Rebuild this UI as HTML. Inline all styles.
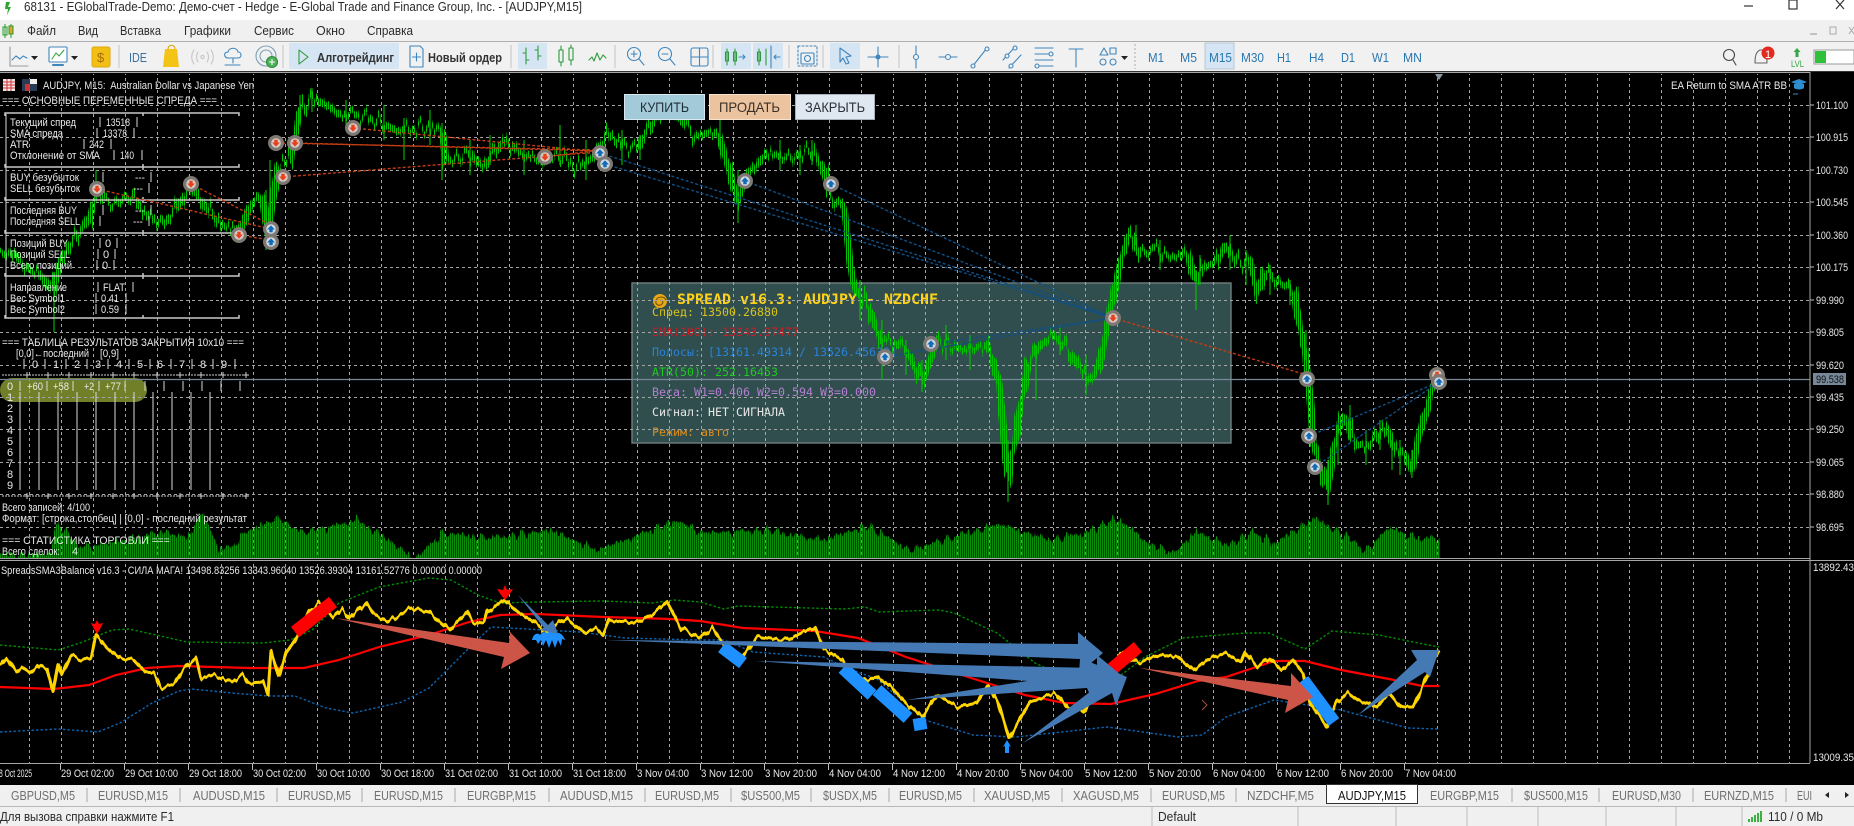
<!DOCTYPE html>
<html lang="ru"><head><meta charset="utf-8"><title>AUDJPY,M15</title>
<style>
html,body{margin:0;padding:0;background:#000;width:1854px;height:826px;overflow:hidden}
svg{display:block;filter:blur(.35px)}
text{font-family:"Liberation Sans","DejaVu Sans",sans-serif;white-space:pre}
.ui text{font-size:12.5px;fill:#2b2b2b}
.tf text{font-size:12.5px;fill:#2a78b0}
.tab text{font-size:12.5px;fill:#6f6f6f}
.c text{font-size:11px;fill:#e8e8e8}
.ax text{font-size:11px;fill:#e8e8e8}
.m text{font-family:"DejaVu Sans Mono","Liberation Mono",monospace;font-size:11.6px}
.s{fill:none;stroke-linecap:round;stroke-linejoin:round}
</style></head><body>
<svg xmlns="http://www.w3.org/2000/svg" width="1854" height="826" viewBox="0 0 1854 826">
<defs>
<pattern id="vg" x="29" y="0" width="32" height="6" patternUnits="userSpaceOnUse"><rect width="1" height="3" fill="#a4a4a4"/></pattern>
<pattern id="tk" x="60" y="0" width="64" height="20" patternUnits="userSpaceOnUse"><rect width="1" height="20" fill="#bbb"/></pattern>
<pattern id="cs" x="0" y="0" width="2" height="4" patternUnits="userSpaceOnUse"><rect width="1.100" height="4" fill="#00c400"/></pattern>
<pattern id="vs" x="0" y="0" width="2" height="4" patternUnits="userSpaceOnUse"><rect width="1.400" height="4" fill="#0a8e0a"/></pattern>
<filter id="jit" filterUnits="userSpaceOnUse" x="0" y="60" width="1854" height="720" color-interpolation-filters="sRGB">
<feTurbulence type="fractalNoise" baseFrequency="0.22 0" numOctaves="3" seed="7"/>
<feColorMatrix type="matrix" values="1 0 0 0 0  0 0 0 0 .5  0 0 0 0 0  0 0 0 0 1" result="n"/>
<feDisplacementMap in="SourceGraphic" in2="n" scale="34" xChannelSelector="G" yChannelSelector="R"/>
</filter>
<filter id="jit2" filterUnits="userSpaceOnUse" x="0" y="60" width="1854" height="720" color-interpolation-filters="sRGB">
<feTurbulence type="fractalNoise" baseFrequency="0.2 0" numOctaves="3" seed="3"/>
<feColorMatrix type="matrix" values="1 0 0 0 0  0 0 0 0 .5  0 0 0 0 0  0 0 0 0 1" result="n"/>
<feDisplacementMap in="SourceGraphic" in2="n" scale="20" xChannelSelector="G" yChannelSelector="R"/>
</filter>
<filter id="jit3" filterUnits="userSpaceOnUse" x="0" y="560" width="1854" height="210" color-interpolation-filters="sRGB">
<feTurbulence type="fractalNoise" baseFrequency="0.18 0" numOctaves="2" seed="11"/>
<feColorMatrix type="matrix" values="1 0 0 0 0  0 0 0 0 .5  0 0 0 0 0  0 0 0 0 1" result="n"/>
<feDisplacementMap in="SourceGraphic" in2="n" scale="9" xChannelSelector="G" yChannelSelector="R"/>
</filter>
<clipPath id="volc"><rect x="0" y="440" width="1810" height="118"/></clipPath>
<clipPath id="mainc"><rect x="0" y="74" width="1810" height="484"/></clipPath>
<g id="mr"><circle r="8" fill="#7d7872"/><circle r="4.800" fill="#d8cbc6"/><path d="M-1.700-3.200h3.400v2.700h2.200L0 3.600-3.900-.5h2.200z" fill="#e8401c"/></g>
<g id="mb"><circle r="8" fill="#7d7872"/><circle r="4.800" fill="#cfd9e2"/><path d="M-1.700 3.200h3.400V.5h2.200L0-3.600-3.900.5h2.200z" fill="#1269b5"/></g>
<path id="pl" d="M27 372v6M24 375h6M48 372v6M45 375h6M69 372v6M66 375h6M91 372v6M88 375h6M113 372v6M110 375h6M134 372v6M131 375h6M157 372v6M154 375h6M180 372v6M177 375h6M201 372v6M198 375h6M223 372v6M220 375h6M246 372v6M243 375h6" stroke="#d0d0d0" fill="none"/>
</defs>
<rect width="1854" height="826" fill="#000"/>
<rect width="1854" height="20" fill="#fff"/>
<rect y="20" width="1854" height="21" fill="#f0f0f0"/>
<rect y="41" width="1854" height="1" fill="#b0b0b0"/>
<rect y="42" width="1854" height="29" fill="#f1f1f1"/>
<rect y="71" width="1854" height="1" fill="#333"/>
<rect y="785" width="1854" height="21" fill="#f0f0f0"/>
<rect y="806" width="1854" height="1" fill="#b8b8b8"/>
<rect y="807" width="1854" height="19" fill="#f0f0f0"/>

<!-- title -->
<g class="ui">
<path d="M6 2l4 0-2 5h3l-4 8 1-6H5z" fill="#2fa32f"/>
<text x="24" y="11" textLength="558" lengthAdjust="spacingAndGlyphs" font-size="12.5">68131 - EGlobalTrade-Demo: Демо-счет - Hedge - E-Global Trade and Finance Group, Inc. - [AUDJPY,M15]</text>
<path d="M1744 6h9" stroke="#333" stroke-width="1.2"/>
<rect x="1789" y="0" width="8" height="9" fill="none" stroke="#333" stroke-width="1.2"/>
<path d="M1836 0l8 9M1844 0l-8 9" stroke="#333" stroke-width="1.2"/>
<!-- menu -->
<path d="M5 24v14M11 24v14" stroke="#2a9a2a" stroke-width="1"/><rect x="3" y="27" width="4" height="8" fill="none" stroke="#2a9a2a"/><rect x="9" y="26" width="4" height="8" fill="#d7a82a" stroke="#2a9a2a"/>
<text x="27" y="35" textLength="29" lengthAdjust="spacingAndGlyphs">Файл</text>
<text x="78" y="35" textLength="20" lengthAdjust="spacingAndGlyphs">Вид</text>
<text x="120" y="35" textLength="41" lengthAdjust="spacingAndGlyphs">Вставка</text>
<text x="184" y="35" textLength="47" lengthAdjust="spacingAndGlyphs">Графики</text>
<text x="254" y="35" textLength="40" lengthAdjust="spacingAndGlyphs">Сервис</text>
<text x="316" y="35" textLength="29" lengthAdjust="spacingAndGlyphs">Окно</text>
<text x="367" y="35" textLength="46" lengthAdjust="spacingAndGlyphs">Справка</text>
<path d="M1810 34h7" stroke="#aaa" stroke-width="1.3"/><rect x="1830" y="27" width="6" height="7" fill="none" stroke="#aaa"/><path d="M1849 27l5 7M1854 27l-5 7" stroke="#aaa"/>
</g>

<!-- toolbar -->
<g class="ui">
<rect x="289" y="43" width="110" height="26" fill="#d5e5f3"/>
<rect x="518" y="43" width="29" height="26" fill="#d5e5f3"/>
<rect x="721" y="43" width="30" height="26" fill="#d5e5f3"/>
<rect x="753" y="43" width="30" height="26" fill="#d5e5f3"/>
<rect x="830" y="43" width="30" height="26" fill="#d5e5f3"/>
<rect x="1205" y="43" width="29" height="26" fill="#d5e5f3" stroke="#b8c8d6"/>
<g stroke="#c4c4c4" stroke-width="1"><path d="M119 45v23M283 45v23M511 45v23M615 45v23M713 45v23M789 45v23M823 45v23M899 45v23"/></g>
<path d="M1135 44v25" stroke="#aaa" stroke-dasharray="2 2"/>

<g class="s" stroke-width="1.100">
<path d="M10 47v19h18" stroke="#9a9a9a"/><path d="M12 60l4-4 4 3 3-3 4 2" stroke="#3f86bd"/>
<rect x="49" y="47" width="18" height="15" rx="1" stroke="#3f86bd" fill="#fff"/><path d="M52 59l4-6 3 3 5-6" stroke="#39a845"/><path d="M53 65h10" stroke="#3f86bd" stroke-width="2"/>
<path d="M168 49c0-5 7-5 7 0" stroke="#d9a80e"/>
<path d="M194 50c-3 4-3 10 0 14M211 50c3 4 3 10 0 14M198 52c-2 3-2 7 0 10M207 52c2 3 2 7 0 10" stroke="#c6c6c6"/><circle cx="202.500" cy="57" r="1.600" stroke="#c6c6c6"/>
<path d="M228 58c-4 0-5-6 0-6 1-5 9-5 10 0 4 0 4 6 0 6zM233 58v5M225 65h15" stroke="#3f86bd"/>
<circle cx="266" cy="56" r="10" stroke="#7f9fb4"/><circle cx="266" cy="56" r="6" stroke="#7f9fb4"/><circle cx="272" cy="62" r="5.500" fill="#4fb05a" stroke="#2f8a3c"/><path d="M269.500 62h5M272 59.500v5" stroke="#fff"/>
<path d="M299 50l9 7-9 7z" stroke="#2f9a3c"/>
<path d="M410 46h10l3 3v18h-13z" stroke="#3f86bd"/><path d="M416.500 53v8M412.500 57h8" stroke="#3f86bd"/>
<path d="M526 48v16M526 53h-3M526 60h3M538 46v14M538 50h-3M538 56h3" stroke="#2f9a3c"/>
<rect x="559" y="50" width="4" height="12" stroke="#2f9a3c"/><path d="M561 46v4M561 62v4" stroke="#2f9a3c"/><rect x="569" y="48" width="4" height="12" stroke="#2f9a3c"/><path d="M571 45v3M571 60v5" stroke="#2f9a3c"/>
<path d="M589 60l3-3 2 4 3-8 3 7 3-5 3 3" stroke="#2f9a3c"/>
<circle cx="634" cy="54" r="6.500" stroke="#3f86bd"/><path d="M639 59l5 6M631 54h6M634 51v6" stroke="#3f86bd"/>
<circle cx="665" cy="54" r="6.500" stroke="#3f86bd"/><path d="M670 59l5 6M662 54h6" stroke="#3f86bd"/>
<rect x="691" y="48" width="17" height="18" rx="2" stroke="#3f86bd"/><path d="M699.500 48v18M691 57h17" stroke="#3f86bd"/>
<path d="M727 49v16M735 49v16" stroke="#2f9a3c"/><rect x="725.500" y="52" width="3" height="9" stroke="#2f9a3c"/><rect x="733.500" y="52" width="3" height="9" stroke="#2f9a3c"/><path d="M739 57h6M743 55l2 2-2 2" stroke="#3f86bd"/>
<path d="M759 49v16M766 49v16" stroke="#2f9a3c"/><rect x="757.500" y="52" width="3" height="9" stroke="#2f9a3c"/><path d="M771 46v22" stroke="#3f86bd"/><path d="M774 57h6M776 55l-2 2 2 2" stroke="#3f86bd"/>
<rect x="798" y="46" width="19" height="20" stroke="#3f86bd" stroke-dasharray="2 2"/><rect x="801" y="53" width="13" height="11" rx="1" stroke="#3f86bd"/><circle cx="807.500" cy="58.500" r="3" stroke="#3f86bd"/>
<path d="M840 48l11 8-5 1 3 6-3 1-3-6-3 4z" stroke="#3f86bd"/>
<path d="M878 47v20M868 57h20" stroke="#3f86bd"/><circle cx="878" cy="57" r="2" fill="#3f86bd" stroke="#3f86bd"/>
<path d="M916 46v22" stroke="#3f86bd"/><circle cx="916" cy="57" r="2.500" stroke="#3f86bd" fill="#f1f1f1"/>
<path d="M939 57h18" stroke="#3f86bd"/><circle cx="948" cy="57" r="2.500" stroke="#3f86bd" fill="#f1f1f1"/>
<path d="M972 67l15-19" stroke="#3f86bd"/><circle cx="973" cy="66" r="2" stroke="#3f86bd" fill="#f1f1f1"/><circle cx="987" cy="49" r="2" stroke="#3f86bd" fill="#f1f1f1"/>
<path d="M1003 60l12-13M1009 68l12-13" stroke="#3f86bd"/><circle cx="1007" cy="56" r="2" stroke="#3f86bd" fill="#f1f1f1"/><circle cx="1015" cy="48" r="2" stroke="#3f86bd" fill="#f1f1f1"/><circle cx="1011" cy="66" r="2" stroke="#3f86bd" fill="#f1f1f1"/>
<path d="M1035 48h18M1035 54h18M1035 60h18M1035 66h18" stroke="#3f86bd"/><circle cx="1051" cy="54" r="2" fill="#f1f1f1" stroke="#3f86bd"/><circle cx="1037" cy="66" r="2" fill="#f1f1f1" stroke="#3f86bd"/>
<path d="M1069 49h14M1076 49v18" stroke="#3f86bd"/>
<path d="M1100 55l4-7 4 7zM1110 48h6v6h-6z" stroke="#3f86bd"/><circle cx="1103" cy="62" r="3" stroke="#3f86bd"/><circle cx="1113" cy="62" r="3" stroke="#3f86bd"/>
<circle cx="1729" cy="55" r="5.500" stroke="#444"/><path d="M1733 60l3 5" stroke="#444"/>
<path d="M1760 50c-4 2-5 6-5 13h12c0-7-1-11-5-13z" stroke="#666"/>
</g>
<path d="M31 56h7l-3.500 4z M71 56h7l-3.500 4z M1121 56h7l-3.500 4z" fill="#222"/>
<rect x="92" y="47" width="18" height="20" rx="2" fill="#f3bf14" stroke="#e0a90a"/>
<text x="97" y="62" style="fill:#a36f00;font-size:13px">$</text>
<text x="129" y="62" textLength="18" lengthAdjust="spacingAndGlyphs" style="fill:#3c6e9e;font-size:12.5px">IDE</text>
<path d="M165 49h12l2 18h-16z" fill="#f3c316"/>
<text x="317" y="62" textLength="77" lengthAdjust="spacingAndGlyphs" style="font-size:13px;font-weight:bold;fill:#333">Алготрейдинг</text>
<text x="428" y="62" textLength="74" lengthAdjust="spacingAndGlyphs" style="font-size:13px;font-weight:bold;fill:#333">Новый ордер</text>
<circle cx="1768" cy="53" r="6.500" fill="#e32a1e"/><text x="1765" y="58" style="fill:#fff;font-size:11px">1</text>
<path d="M1797 48l3.500 4h-2v5h-3v-5h-2z" fill="#35a845"/><text x="1791" y="67" textLength="13" lengthAdjust="spacingAndGlyphs" style="fill:#35a845;font-size:9px">LVL</text>
<rect x="1814" y="50" width="40" height="14" fill="#fff" stroke="#999"/><rect x="1815" y="51" width="11" height="12" fill="#2fc13a"/>
</g>
<g class="tf">
<text x="1148" y="62" textLength="16" lengthAdjust="spacingAndGlyphs">M1</text>
<text x="1180" y="62" textLength="17" lengthAdjust="spacingAndGlyphs">M5</text>
<text x="1209" y="62" textLength="23" lengthAdjust="spacingAndGlyphs">M15</text>
<text x="1241" y="62" textLength="23" lengthAdjust="spacingAndGlyphs">M30</text>
<text x="1277" y="62" textLength="14" lengthAdjust="spacingAndGlyphs">H1</text>
<text x="1309" y="62" textLength="15" lengthAdjust="spacingAndGlyphs">H4</text>
<text x="1341" y="62" textLength="14" lengthAdjust="spacingAndGlyphs">D1</text>
<text x="1372" y="62" textLength="17" lengthAdjust="spacingAndGlyphs">W1</text>
<text x="1403" y="62" textLength="19" lengthAdjust="spacingAndGlyphs">MN</text>
</g>

<!-- info panel -->
<rect x="632" y="283" width="599" height="160" fill="#304e4e" stroke="#717f7f" stroke-width="1.400"/>
<circle cx="660" cy="301" r="7" fill="#e6a817"/><path d="M660 301c2-2 4 1 2 3-3 3-7 0-6-3 1-5 8-5 10-1" fill="none" stroke="#7a5200" stroke-width="1.100"/>
<g class="m">
<text x="677" y="304" textLength="261" lengthAdjust="spacingAndGlyphs" style="font-size:14.500px;font-weight:bold;fill:#ffd21a">SPREAD v16.3: AUDJPY - NZDCHF</text>
<text x="652" y="316" textLength="126" style="fill:#d8c31c">Спред: 13500.26880</text>
<text x="652" y="336" textLength="147" style="fill:#d41a24">SMA(100): 13343.97477</text>
<text x="652" y="356" textLength="245" style="fill:#2a82d8">Полосы: [13161.49314 / 13526.45639]</text>
<text x="652" y="376" textLength="126" style="fill:#1fc91f">ATR(50): 252.16453</text>
<text x="652" y="396" textLength="224" style="fill:#b47fd0">Веса: W1=0.406 W2=0.594 W3=0.000</text>
<text x="652" y="416" textLength="133" style="fill:#e6e6e6">Сигнал: НЕТ СИГНАЛА</text>
<text x="652" y="436" textLength="77" style="fill:#d98f1f">Режим: авто</text>
</g>

<rect x="0" y="378" width="147" height="24" rx="12" fill="#717f28"/>

<!-- grid -->
<path d="M0 105.500H1810M0 137.500H1810M0 170.500H1810M0 202.500H1810M0 235.500H1810M0 267.500H1810M0 300.500H1810M0 332.500H1810M0 365.500H1810M0 397.500H1810M0 429.500H1810M0 462.500H1810M0 494.500H1810M0 527.500H1810" stroke="#a4a4a4" stroke-dasharray="3 3"/>
<rect x="0" y="74" width="1810" height="484" fill="url(#vg)"/>
<rect x="0" y="563" width="1810" height="200" fill="url(#vg)"/>
<path d="M0 379.500H1810" stroke="#778899" stroke-width="1.300"/>

<!-- volumes -->
<g clip-path="url(#volc)">
<polygon filter="url(#jit2)" fill="url(#vs)" points="0,555 50,554 54,530 60,525 80,547 112,543 160,532 187,537 203,512 219,550 232,547 245,532 279,518 303,533 357,520 384,537 415,559 442,533 491,538 549,530 598,550 625,540 678,520 700,533 768,530 820,540 868,526 910,550 960,535 1000,524 1050,540 1087,532 1117,518 1147,542 1173,553 1196,532 1229,545 1252,532 1276,543 1314,518 1358,543 1363,553 1388,528 1417,538 1440,538 1440,590 0,590"/>
</g>

<!-- candles -->
<g clip-path="url(#mainc)">
<polyline filter="url(#jit)" fill="none" stroke="url(#cs)" stroke-width="7" stroke-linejoin="bevel" points="0,256 10,252 20,262 30,270 40,274 53,292 60,262 70,245 80,232 90,218 97,190 105,200 115,205 130,195 145,212 160,225 175,210 191,186 205,205 222,225 240,232 250,205 262,195 268,235 278,165 290,160 300,112 312,97 339,113 366,117 402,132 420,127 442,130 446,163 469,153 482,167 504,140 518,153 540,160 562,157 576,167 594,157 609,133 625,147 638,147 652,123 665,105 683,122 696,137 710,132 719,137 730,173 737,203 745,177 768,153 790,158 812,150 824,170 830,197 844,207 850,263 855,290 865,300 881,340 897,343 910,355 922,381 938,340 963,350 987,345 999,380 1004,440 1008,480 1012,455 1022,400 1028,365 1040,345 1053,335 1065,345 1081,370 1093,380 1101,360 1110,310 1116,285 1120,262 1131,232 1140,255 1155,248 1165,255 1180,258 1187,250 1195,280 1205,265 1215,265 1225,245 1240,265 1250,260 1258,295 1265,270 1280,285 1288,285 1295,295 1300,330 1305,350 1310,395 1313,440 1320,470 1327,490 1333,450 1340,425 1345,415 1355,445 1370,445 1385,425 1395,450 1405,455 1412,470 1420,430 1427,410 1433,385 1439,375"/>
<path d="M54 272V332M442 123V180M1196 270V310M1008 440V502M1328 460V505M738 170V223M622 130V165M1306 330V360M1412 450V478M922 360V392M882 320V380M96 170V200M266 190V250M270 160V240M312 88V112M300 95V125M346 100V130M384 105V140M404 118V160M430 110V145M470 140V175M490 135V165M524 140V175M560 125V165M586 140V180M640 135V160M720 120V150M780 140V170M800 145V175M812 140V165M860 280V320M906 340V375M946 325V360M970 335V370M1036 345V400M1060 325V355M1086 355V395M1136 225V245M1160 240V270M1200 255V285M1230 235V270M1246 250V285M1270 265V295M1290 280V305M1338 425V465M1350 405V440M1366 430V465M1380 420V450M1392 440V470M1400 440V475" stroke="#00c400" stroke-width="1.100"/>
</g>

<!-- labels -->
<g class="c">
<rect x="3" y="79" width="12" height="12" fill="#e8e8e8"/><path d="M3 82h12M3 85h12M3 88h12M7 79v12M11 79v12" stroke="#d33" stroke-width="1"/>
<rect x="22" y="79" width="15" height="12" fill="#2b3a55"/><rect x="30" y="79" width="7" height="5" fill="#eee"/><rect x="25" y="84" width="5" height="7" fill="#c33"/>
<text x="43" y="89" textLength="211" lengthAdjust="spacingAndGlyphs">AUDJPY, M15:  Australian Dollar vs Japanese Yen</text>
<text x="1671" y="89" textLength="116" lengthAdjust="spacingAndGlyphs">EA Return to SMA ATR BB</text>
<path d="M1799 79l8 3-8 3-8-3z" fill="#2f8ed0"/><path d="M1794 84v4c2 2 8 2 10 0v-4" fill="#2f8ed0"/><path d="M1793 94h5" stroke="#2f8ed0"/>
<path d="M1435 74h8l-4 6z" fill="#8b97a3"/>

<text x="2" y="104" textLength="215" lengthAdjust="spacingAndGlyphs">=== ОСНОВНЫЕ ПЕРЕМЕННЫЕ СПРЕДА ===</text>
<text x="10" y="126" textLength="66" lengthAdjust="spacingAndGlyphs">Текущий спред</text><text x="106" y="126" textLength="24" lengthAdjust="spacingAndGlyphs">13518</text>
<text x="10" y="137" textLength="53" lengthAdjust="spacingAndGlyphs">SMA спреда</text><text x="103" y="137" textLength="24" lengthAdjust="spacingAndGlyphs">13378</text>
<text x="10" y="148" textLength="19" lengthAdjust="spacingAndGlyphs">ATR</text><text x="89" y="148" textLength="15" lengthAdjust="spacingAndGlyphs">242</text>
<text x="10" y="159" textLength="90" lengthAdjust="spacingAndGlyphs">Отклонение от SMA</text><text x="120" y="159" textLength="14" lengthAdjust="spacingAndGlyphs">140</text>
<text x="10" y="181" textLength="69" lengthAdjust="spacingAndGlyphs">BUY безубыток</text><text x="135" y="181" textLength="10" lengthAdjust="spacingAndGlyphs">---</text>
<text x="10" y="192" textLength="70" lengthAdjust="spacingAndGlyphs">SELL безубыток</text><text x="133" y="192" textLength="10" lengthAdjust="spacingAndGlyphs">---</text>
<text x="10" y="214" textLength="67" lengthAdjust="spacingAndGlyphs">Последняя BUY</text><text x="135" y="214" textLength="10" lengthAdjust="spacingAndGlyphs">---</text>
<text x="10" y="225" textLength="70" lengthAdjust="spacingAndGlyphs">Последняя SELL</text><text x="133" y="225" textLength="10" lengthAdjust="spacingAndGlyphs">---</text>
<text x="10" y="247" textLength="58" lengthAdjust="spacingAndGlyphs">Позиций BUY</text><text x="105" y="247">0</text>
<text x="10" y="258" textLength="60" lengthAdjust="spacingAndGlyphs">Позиций SELL</text><text x="103" y="258">0</text>
<text x="10" y="269" textLength="62" lengthAdjust="spacingAndGlyphs">Всего позиций</text><text x="102" y="269">0</text>
<text x="10" y="291" textLength="57" lengthAdjust="spacingAndGlyphs">Направление</text><text x="103" y="291" textLength="22" lengthAdjust="spacingAndGlyphs">FLAT</text>
<text x="10" y="302" textLength="55" lengthAdjust="spacingAndGlyphs">Вес Symbol1</text><text x="101" y="302" textLength="18" lengthAdjust="spacingAndGlyphs">0.41</text>
<text x="10" y="313" textLength="55" lengthAdjust="spacingAndGlyphs">Вес Symbol2</text><text x="101" y="313" textLength="18" lengthAdjust="spacingAndGlyphs">0.59</text>

<text x="2" y="346" textLength="242" lengthAdjust="spacingAndGlyphs">=== ТАБЛИЦА РЕЗУЛЬТАТОВ ЗАКРЫТИЯ 10x10 ===</text>
<text x="16" y="357" textLength="73" lengthAdjust="spacingAndGlyphs">[0,0]←последний</text><text x="100" y="357" textLength="19" lengthAdjust="spacingAndGlyphs">[0,9]</text>
<text x="32" y="368">0</text><text x="53" y="368">1</text><text x="74" y="368">2</text><text x="95" y="368">3</text><text x="116" y="368">4</text><text x="137" y="368">5</text><text x="157" y="368">6</text><text x="179" y="368">7</text><text x="200" y="368">8</text><text x="221" y="368">9</text>
<text x="7" y="390">0</text><text x="27" y="390" textLength="16" lengthAdjust="spacingAndGlyphs">+60</text><text x="53" y="390" textLength="16" lengthAdjust="spacingAndGlyphs">+58</text><text x="84" y="390" textLength="10" lengthAdjust="spacingAndGlyphs">+2</text><text x="105" y="390" textLength="16" lengthAdjust="spacingAndGlyphs">+77</text>
<text x="7" y="401">1</text><text x="7" y="412">2</text><text x="7" y="423">3</text><text x="7" y="434">4</text><text x="7" y="445">5</text><text x="7" y="456">6</text><text x="7" y="467">7</text><text x="7" y="478">8</text><text x="7" y="489">9</text>
<text x="2" y="511" textLength="88" lengthAdjust="spacingAndGlyphs">Всего записей: 4/100</text>
<text x="2" y="522" textLength="245" lengthAdjust="spacingAndGlyphs">Формат: [строка,столбец] | [0,0] - последний результат</text>
<text x="2" y="544" textLength="168" lengthAdjust="spacingAndGlyphs">=== СТАТИСТИКА ТОРГОВЛИ ===</text>
<text x="2" y="555" textLength="58" lengthAdjust="spacingAndGlyphs">Всего сделок:</text><text x="72" y="555">4</text>
<text x="1" y="574" textLength="481" lengthAdjust="spacingAndGlyphs">SpreadsSMA3Balance v16.3 - СИЛА МАГА! 13498.83256 13343.96040 13526.39304 13161.52776 0.00000 0.00000</text>
</g>

<!-- left panel lines -->
<path d="M100 117v10M137 117v10M97 128v10M134 128v10M84 139v10M111 139v10M114 150v10M142 150v10M103 172v10M151 172v10M100 183v10M149 183v10M103 205v10M151 205v10M100 216v10M149 216v10M100 238v10M117 238v10M98 249v10M115 249v10M97 260v10M114 260v10M98 282v10M133 282v10M96 293v10M126 293v10M96 304v10M126 304v10M6 114V318M24 359v10M45 359v10M66 359v10M87 359v10M108 359v10M129 359v10M150 359v10M171 359v10M192 359v10M213 359v10M235 359v10M20 381v10M47 381v10M73 381v10M99 381v10M125 381v10M145 381v10M164 381v10M183 381v10M202 381v10M221 381v10M240 381v10M20 392V490M39 392V490M58 392V490M77 392V490M96 392V490M115 392V490M134 392V490M153 392V490M172 392V490M191 392V490M210 392V490" stroke="#d8d8d8" stroke-width="1" fill="none"/>
<path d="M2 375h245M2 496h245" stroke="#d0d0d0" stroke-dasharray="2 1"/>
<use href="#pl"/><use href="#pl" y="121"/>
<path d="M5 116v-3h234v3M143 113v3M5 164v3h234v-3M143 164v6M5 197v3h234v-3M143 197v6M5 230v3h234v-3M143 230v6M5 273v3h234v-3M143 273v6M5 315v3h234v-3M143 315v3" fill="none" stroke="#c9c9c9" stroke-width="1.500"/>

<!-- trade lines -->
<path d="M97 189L271 229M191 184L271 225M239 235L270 240M277 143L600 150M295 143L600 151M353 128L600 152M283 177L600 152M545 157L600 150M1113 318L1307 375" stroke="#c23c14" stroke-width="1.400" stroke-dasharray="3 2" fill="none"/>
<path d="M600 153L1113 318M605 164L1113 318M745 181L1113 318M831 184L1113 318M885 357L1113 318M931 344L1113 318M1309 436L1439 382M1315 467L1439 382" stroke="#0f4f85" stroke-width="1.400" stroke-dasharray="3 2" fill="none"/>
<!-- markers -->
<use href="#mr" x="97" y="189"/><use href="#mr" x="191" y="184"/><use href="#mr" x="239" y="235"/><use href="#mr" x="276" y="143"/><use href="#mr" x="295" y="143"/><use href="#mr" x="283" y="177"/><use href="#mr" x="353" y="128"/><use href="#mr" x="545" y="157"/><use href="#mr" x="1113" y="318"/><use href="#mr" x="1437" y="375"/>
<use href="#mb" x="271" y="229"/><use href="#mb" x="271" y="242"/><use href="#mb" x="600" y="153"/><use href="#mb" x="605" y="164"/><use href="#mb" x="745" y="181"/><use href="#mb" x="831" y="184"/><use href="#mb" x="885" y="357"/><use href="#mb" x="931" y="344"/><use href="#mb" x="1307" y="379"/><use href="#mb" x="1309" y="436"/><use href="#mb" x="1315" y="467"/><use href="#mb" x="1439" y="382"/>

<!-- indicator lines -->
<polyline fill="none" stroke="#008a00" stroke-width="1.400" stroke-dasharray="2.500 2" points="0,645 58,650 80,643 112,630 129,629 156,635 187,642 263,643 290,640 312,630 339,603 379,587 429,578 451,580 478,595 500,603 536,602 603,601 652,603 674,600 700,602 724,609 738,606 844,609 865,607 879,612 939,610 954,613 997,633 1035,663 1064,677 1121,675 1145,657 1183,638 1245,633 1269,633 1289,642 1305,649 1332,631 1379,635 1418,643 1439,647"/>
<polyline fill="none" stroke="#0c62ad" stroke-width="1.400" stroke-dasharray="2.500 2" points="0,732 58,729 98,732 120,723 152,703 179,691 192,689 232,693 268,696 295,696 326,708 353,713 402,702 429,688 464,653 491,627 580,632 625,638 700,640 724,640 753,652 824,657 844,667 877,679 925,720 973,735 1016,737 1107,727 1178,737 1202,735 1226,717 1274,700 1341,710 1408,728 1439,729"/>
<polyline fill="none" stroke="#f00" stroke-width="2.200" points="0,687 54,689 89,685 116,675 147,668 179,666 250,668 304,668 339,660 379,647 429,635 469,622 500,615 536,614 603,617 670,619 700,621 743,628 815,631 858,638 906,657 968,677 1025,695 1064,703 1111,704 1155,694 1198,681 1226,677 1274,661 1305,661 1341,670 1389,679 1422,686 1439,686"/>
<polyline filter="url(#jit3)" fill="none" stroke="#ffd500" stroke-width="3" stroke-linejoin="round" points="0,667 7,658 16,672 22,667 31,673 40,665 47,669 53,692 58,663 62,675 71,655 80,660 91,658 96,635 107,648 120,658 134,660 145,672 154,673 161,688 174,684 183,670 196,658 201,678 214,675 232,682 243,675 248,683 263,682 268,695 271,650 279,677 286,653 295,640 308,613 319,603 333,618 342,609 350,618 366,603 373,613 388,622 411,608 429,612 449,630 467,612 473,622 484,623 487,612 504,600 518,612 531,620 547,632 565,618 585,633 596,628 603,635 609,620 634,623 652,615 667,602 681,628 700,638 712,628 719,638 738,663 757,637 786,640 815,627 824,650 843,660 853,683 877,677 891,687 906,703 922,717 937,695 958,707 977,703 987,685 997,700 1009,738 1030,702 1044,697 1056,693 1068,708 1083,712 1102,687 1121,653 1138,663 1159,655 1178,657 1193,670 1207,660 1226,653 1241,662 1245,652 1257,667 1269,658 1281,670 1293,660 1303,673 1310,703 1327,727 1336,703 1348,693 1358,700 1377,707 1389,693 1401,707 1413,707 1427,677 1439,650"/>

<!-- arrow clusters -->
<path d="M722 647L743 663M843 668L872 695M877 690L908 718M919 718L921 730M1303 680L1334 722" stroke="#1e90ff" stroke-width="13" stroke-linecap="butt" fill="none"/>
<path d="M295 632L333 602M1107 673L1138 647" stroke="#f00" stroke-width="13" stroke-linecap="butt" fill="none"/>
<path d="M97 620l2 4 4-1-3 6-3 5-3-5-3-6 4 1zM505 585l2 5 6-1-4 6-4 5-4-5-4-6 6 1z" fill="#f00"/>
<path d="M532 640c1-6 6-8 8-5 3-4 5-3 7-2 3-2 6-2 8 0 4-1 8 1 10 7l-3-1-1 7-3-6-3 8-3-8-3 8-3-8-3 6-2-6-3 4-2-4z" fill="#1e90ff"/>
<path d="M1007 740l4 7-2-1v7h-4v-7l-2 1z" fill="#1e90ff"/>
<!-- big arrows -->
<polygon points="335,618 509,643 510,632 530,653 501,669 504,657" fill="#cd5548"/>
<polygon points="518,595 548,625 553,620 558,634 540,630 544,628" fill="#4479b4"/>
<polygon points="605,640 1078,644 1078,632 1103,653 1079,673 1080,659" fill="#4479b4"/>
<polygon points="755,661 1097,668 1097,655 1121,675 1098,695 1097,686" fill="#4479b4"/>
<polygon points="906,700 1085,672 1085,660 1127,677 1090,695 1087,688" fill="#4479b4"/>
<polygon points="1023,743 1095,688 1085,692 1127,677 1116,706 1112,693" fill="#4479b4"/>
<polygon points="1140,668 1291,686 1291,673 1313,697 1285,713 1288,700" fill="#cd5548"/>
<polygon points="1358,715 1417,660 1411,650 1439,650 1430,677 1425,672" fill="#4479b4"/>
<path d="M1202 700l5 5-5 5" stroke="#a8503f" stroke-width="1" fill="none"/>

<!-- trade buttons -->
<rect x="624.500" y="94.500" width="80" height="25" fill="#a3cad9" stroke="#d8e8ee"/>
<rect x="709.500" y="94.500" width="81" height="25" fill="#ecc39f" stroke="#f5e3cf"/>
<rect x="795.500" y="94.500" width="79" height="25" fill="#dfe7f1" stroke="#a8b0bb"/>
<text x="640" y="112" textLength="49" lengthAdjust="spacingAndGlyphs" style="font-size:14px;fill:#1f2d38">КУПИТЬ</text>
<text x="719" y="112" textLength="61" lengthAdjust="spacingAndGlyphs" style="font-size:14px;fill:#3a3028">ПРОДАТЬ</text>
<text x="805" y="112" textLength="60" lengthAdjust="spacingAndGlyphs" style="font-size:14px;fill:#2b3038">ЗАКРЫТЬ</text>

<!-- axes -->
<path d="M1810 72v691M0 72.500h1810M0 558.500h1810M0 560.500h1854M0 763.500h1810" stroke="#a6a6a6" stroke-width="1" fill="none"/>
<g class="ax">
<text x="1816" y="109" textLength="32" lengthAdjust="spacingAndGlyphs">101.100</text>
<text x="1816" y="141" textLength="32" lengthAdjust="spacingAndGlyphs">100.915</text>
<text x="1816" y="174" textLength="32" lengthAdjust="spacingAndGlyphs">100.730</text>
<text x="1816" y="206" textLength="32" lengthAdjust="spacingAndGlyphs">100.545</text>
<text x="1816" y="239" textLength="32" lengthAdjust="spacingAndGlyphs">100.360</text>
<text x="1816" y="271" textLength="32" lengthAdjust="spacingAndGlyphs">100.175</text>
<text x="1816" y="304" textLength="28" lengthAdjust="spacingAndGlyphs">99.990</text>
<text x="1816" y="336" textLength="28" lengthAdjust="spacingAndGlyphs">99.805</text>
<text x="1816" y="369" textLength="28" lengthAdjust="spacingAndGlyphs">99.620</text>
<text x="1816" y="401" textLength="28" lengthAdjust="spacingAndGlyphs">99.435</text>
<text x="1816" y="433" textLength="28" lengthAdjust="spacingAndGlyphs">99.250</text>
<text x="1816" y="466" textLength="28" lengthAdjust="spacingAndGlyphs">99.065</text>
<text x="1816" y="498" textLength="28" lengthAdjust="spacingAndGlyphs">98.880</text>
<text x="1816" y="531" textLength="28" lengthAdjust="spacingAndGlyphs">98.695</text>
<rect x="1813" y="373" width="33" height="12" fill="#778899"/>
<text x="1816" y="383" textLength="28" lengthAdjust="spacingAndGlyphs" style="fill:#111">99.538</text>
<text x="1813" y="571" textLength="41" lengthAdjust="spacingAndGlyphs">13892.43</text>
<text x="1813" y="761" textLength="41" lengthAdjust="spacingAndGlyphs">13009.35</text>
<path d="M1810 105h4M1810 137h4M1810 170h4M1810 202h4M1810 235h4M1810 267h4M1810 300h4M1810 332h4M1810 365h4M1810 397h4M1810 429h4M1810 462h4M1810 494h4M1810 527h4" stroke="#bbb"/>
<text x="-1" y="777" textLength="33" lengthAdjust="spacingAndGlyphs">8 Oct 2025</text>
<text x="61" y="777" textLength="53" lengthAdjust="spacingAndGlyphs">29 Oct 02:00</text>
<text x="125" y="777" textLength="53" lengthAdjust="spacingAndGlyphs">29 Oct 10:00</text>
<text x="189" y="777" textLength="53" lengthAdjust="spacingAndGlyphs">29 Oct 18:00</text>
<text x="253" y="777" textLength="53" lengthAdjust="spacingAndGlyphs">30 Oct 02:00</text>
<text x="317" y="777" textLength="53" lengthAdjust="spacingAndGlyphs">30 Oct 10:00</text>
<text x="381" y="777" textLength="53" lengthAdjust="spacingAndGlyphs">30 Oct 18:00</text>
<text x="445" y="777" textLength="53" lengthAdjust="spacingAndGlyphs">31 Oct 02:00</text>
<text x="509" y="777" textLength="53" lengthAdjust="spacingAndGlyphs">31 Oct 10:00</text>
<text x="573" y="777" textLength="53" lengthAdjust="spacingAndGlyphs">31 Oct 18:00</text>
<text x="637" y="777" textLength="52" lengthAdjust="spacingAndGlyphs">3 Nov 04:00</text>
<text x="701" y="777" textLength="52" lengthAdjust="spacingAndGlyphs">3 Nov 12:00</text>
<text x="765" y="777" textLength="52" lengthAdjust="spacingAndGlyphs">3 Nov 20:00</text>
<text x="829" y="777" textLength="52" lengthAdjust="spacingAndGlyphs">4 Nov 04:00</text>
<text x="893" y="777" textLength="52" lengthAdjust="spacingAndGlyphs">4 Nov 12:00</text>
<text x="957" y="777" textLength="52" lengthAdjust="spacingAndGlyphs">4 Nov 20:00</text>
<text x="1021" y="777" textLength="52" lengthAdjust="spacingAndGlyphs">5 Nov 04:00</text>
<text x="1085" y="777" textLength="52" lengthAdjust="spacingAndGlyphs">5 Nov 12:00</text>
<text x="1149" y="777" textLength="52" lengthAdjust="spacingAndGlyphs">5 Nov 20:00</text>
<text x="1213" y="777" textLength="52" lengthAdjust="spacingAndGlyphs">6 Nov 04:00</text>
<text x="1277" y="777" textLength="52" lengthAdjust="spacingAndGlyphs">6 Nov 12:00</text>
<text x="1341" y="777" textLength="52" lengthAdjust="spacingAndGlyphs">6 Nov 20:00</text>
<text x="1405" y="777" textLength="51" lengthAdjust="spacingAndGlyphs">7 Nov 04:00</text>
</g>
<rect x="0" y="764" width="1440" height="6" fill="url(#tk)"/>

<!-- tabs -->
<g class="tab">
<text x="11" y="800" textLength="64" lengthAdjust="spacingAndGlyphs">GBPUSD,M5</text>
<text x="98" y="800" textLength="70" lengthAdjust="spacingAndGlyphs">EURUSD,M15</text>
<text x="193" y="800" textLength="72" lengthAdjust="spacingAndGlyphs">AUDUSD,M15</text>
<text x="288" y="800" textLength="63" lengthAdjust="spacingAndGlyphs">EURUSD,M5</text>
<text x="374" y="800" textLength="69" lengthAdjust="spacingAndGlyphs">EURUSD,M15</text>
<text x="467" y="800" textLength="69" lengthAdjust="spacingAndGlyphs">EURGBP,M15</text>
<text x="560" y="800" textLength="73" lengthAdjust="spacingAndGlyphs">AUDUSD,M15</text>
<text x="655" y="800" textLength="64" lengthAdjust="spacingAndGlyphs">EURUSD,M5</text>
<text x="741" y="800" textLength="59" lengthAdjust="spacingAndGlyphs">$US500,M5</text>
<text x="823" y="800" textLength="54" lengthAdjust="spacingAndGlyphs">$USDX,M5</text>
<text x="899" y="800" textLength="63" lengthAdjust="spacingAndGlyphs">EURUSD,M5</text>
<text x="984" y="800" textLength="66" lengthAdjust="spacingAndGlyphs">XAUUSD,M5</text>
<text x="1073" y="800" textLength="66" lengthAdjust="spacingAndGlyphs">XAGUSD,M5</text>
<text x="1162" y="800" textLength="63" lengthAdjust="spacingAndGlyphs">EURUSD,M5</text>
<text x="1247" y="800" textLength="67" lengthAdjust="spacingAndGlyphs">NZDCHF,M5</text>
<rect x="1326.500" y="784.500" width="91" height="19" fill="#fff" stroke="#333"/>
<text x="1338" y="800" textLength="68" lengthAdjust="spacingAndGlyphs" style="fill:#111">AUDJPY,M15</text>
<text x="1430" y="800" textLength="69" lengthAdjust="spacingAndGlyphs">EURGBP,M15</text>
<text x="1524" y="800" textLength="64" lengthAdjust="spacingAndGlyphs">$US500,M15</text>
<text x="1612" y="800" textLength="69" lengthAdjust="spacingAndGlyphs">EURUSD,M30</text>
<text x="1704" y="800" textLength="70" lengthAdjust="spacingAndGlyphs">EURNZD,M15</text>
<text x="1797" y="800" textLength="15" lengthAdjust="spacingAndGlyphs">EUI</text>
<path d="M87 788v14M180 788v14M277 788v14M362 788v14M455 788v14M549 788v14M645 788v14M731 788v14M811 788v14M889 788v14M974 788v14M1062 788v14M1151 788v14M1236 788v14M1512 788v14M1599 788v14M1693 788v14M1786 788v14" stroke="#a8a8a8"/>
<path d="M1829 792v6l-4-3zM1845 792v6l4-3z" fill="#222"/>
</g>
<!-- status -->
<g class="ui">
<text x="0" y="821" textLength="174" lengthAdjust="spacingAndGlyphs">Для вызова справки нажмите F1</text>
<text x="1158" y="821" textLength="38" lengthAdjust="spacingAndGlyphs">Default</text>
<text x="1768" y="821" textLength="55" lengthAdjust="spacingAndGlyphs">110 / 0 Mb</text>
<path d="M1152 807v19M1298 807v19M1396 807v19M1467 807v19M1538 807v19M1606 807v19M1676 807v19M1742 807v19" stroke="#bbb"/>
<path d="M1748 822v-3h2v3zM1751 822v-5h2v5zM1754 822v-7h2v7zM1757 822v-9h2v9zM1760 822v-11h2v11z" fill="#3cb043"/>
</g>
</svg>
</body></html>
